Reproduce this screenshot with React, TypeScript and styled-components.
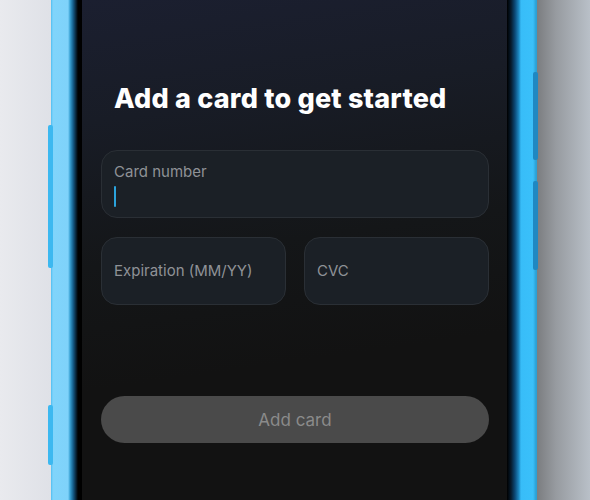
import styled, { createGlobalStyle } from "styled-components";

const GlobalStyle = createGlobalStyle`
  html, body {
    margin: 0;
    padding: 0;
    overflow: hidden;
  }
  body {
    font-family: Inter, "Liberation Sans", sans-serif;
  }
`;

const Stage = styled.div`
  position: relative;
  width: 590px;
  height: 500px;
  overflow: hidden;
  background: linear-gradient(
    90deg,
    #e9eaee 0px,
    #dfe1e7 51px,
    #7b7d80 537px,
    #979ba0 556px,
    #b9c0c8 590px
  );
`;

const Phone = styled.div`
  position: relative;
  display: flex;
  margin-left: 51px;
  width: 486px;
  height: 500px;
  box-sizing: border-box;
  padding: 0 30px 0 31px;
  background: linear-gradient(
    90deg,
    #50bdf0 0px,
    #80d4fb 2px,
    #7fd2fa 17px,
    #3aa2d4 19px,
    #16608e 22px,
    #082438 25px,
    #000000 27px,
    #000000 31px,
    #000000 456px,
    #061a2c 460px,
    #0c4a78 464px,
    #1e8cc6 468px,
    #38bdf8 470px,
    #3ac0fa 482px,
    #2aa0d6 485px,
    #2aa0d6 486px
  );
`;

const SideButton = styled.div<{ $left: number; $top: number; $height: number; $dark?: boolean }>`
  position: absolute;
  left: ${(p) => p.$left}px;
  top: ${(p) => p.$top}px;
  width: 5px;
  height: ${(p) => p.$height}px;
  border-radius: 2px;
  background: ${(p) => (p.$dark ? "#1f88c2" : "#3cb8f0")};
`;

const Screen = styled.div`
  flex: 1;
  display: flex;
  flex-direction: column;
  padding: 83px 18px 0 19px;
  background: linear-gradient(
    172deg,
    #1b1f30 0%,
    #181c26 22%,
    #141618 48%,
    #121212 70%,
    #121212 100%
  );
`;

const Title = styled.h1`
  margin: 0 0 35px 13px;
  font-family: Inter, sans-serif;
  font-weight: 800;
  font-size: 27px;
  line-height: 32px;
  letter-spacing: 0.2px;
  color: #ffffff;
`;

const Field = styled.div<{ $centered?: boolean }>`
  height: 68px;
  box-sizing: border-box;
  display: flex;
  flex-direction: column;
  justify-content: ${(p) => (p.$centered ? "center" : "flex-start")};
  padding: ${(p) => (p.$centered ? "0 12px" : "12px 12px 0")};
  background: #1b2026;
  border: 1px solid #2a2f35;
  border-radius: 16px;
`;

const Label = styled.span`
  font-size: 15px;
  line-height: 18px;
  color: #8f9297;
`;

const Cursor = styled.div`
  width: 2px;
  height: 21px;
  margin-top: 5px;
  border-radius: 1px;
  background: #2ba3dc;
`;

const Row = styled.div`
  display: grid;
  grid-template-columns: 1fr 1fr;
  gap: 18px;
  margin-top: 19px;
`;

const SubmitButton = styled.button`
  margin-top: 91px;
  height: 47px;
  border: none;
  border-radius: 24px;
  background: #4a4a4a;
  color: #8b8b8b;
  font-family: Inter, sans-serif;
  font-size: 17px;
  cursor: default;
`;

export default function App() {
  return (
    <>
      <GlobalStyle />
      <Stage>
        <Phone>
          <SideButton $left={-3} $top={125} $height={143} />
          <SideButton $left={-3} $top={405} $height={60} />
          <SideButton $left={482} $top={72} $height={88} $dark />
          <SideButton $left={482} $top={181} $height={89} $dark />
          <Screen>
            <Title>Add a card to get started</Title>
            <Field>
              <Label>Card number</Label>
              <Cursor />
            </Field>
            <Row>
              <Field $centered>
                <Label>Expiration (MM/YY)</Label>
              </Field>
              <Field $centered>
                <Label>CVC</Label>
              </Field>
            </Row>
            <SubmitButton>Add card</SubmitButton>
          </Screen>
        </Phone>
      </Stage>
    </>
  );
}
